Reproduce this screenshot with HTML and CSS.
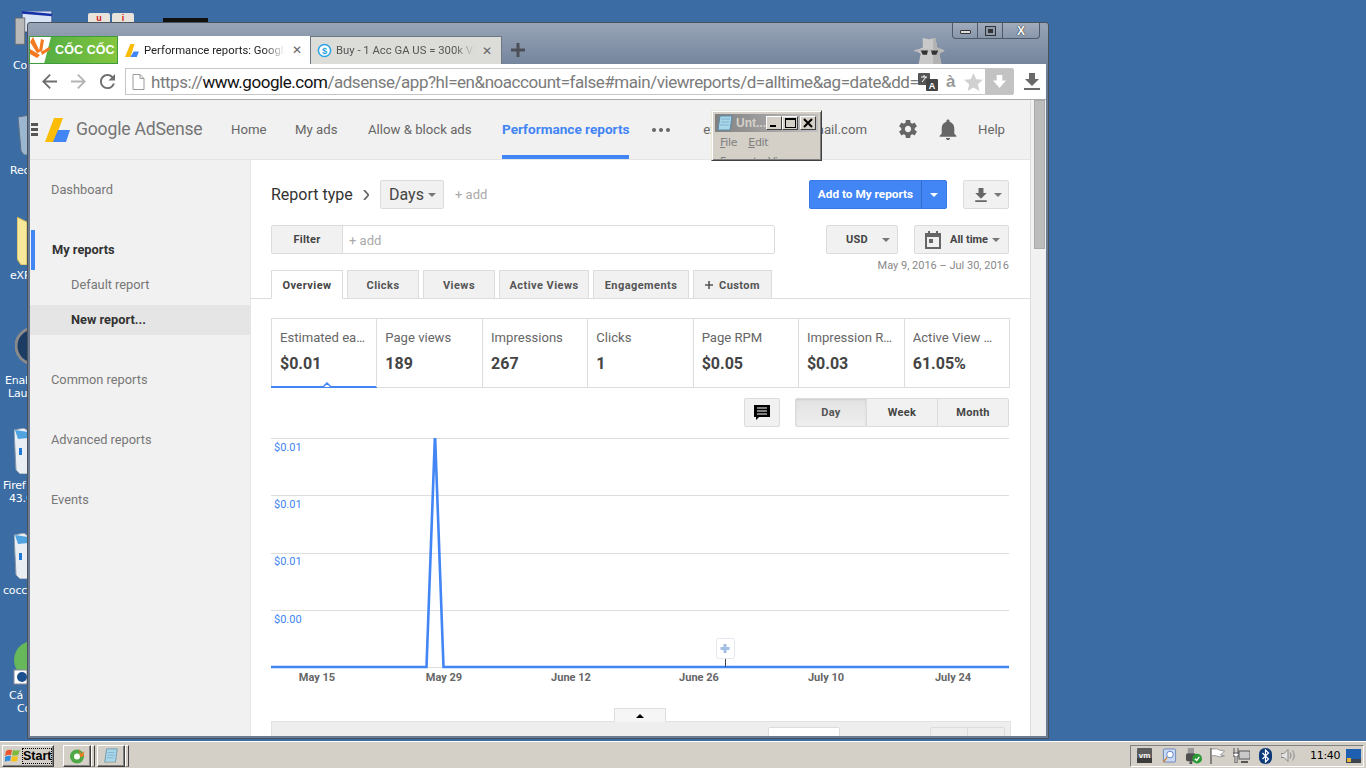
FILE: index.html
```html
<!DOCTYPE html>
<html lang="en">
<head>
<meta charset="utf-8">
<title>Performance reports: Google AdSense</title>
<link rel="stylesheet" href="styles.css">
</head>
<body>
<div class="desktop">
  <div class="dicon di-computer"><svg class="di-svg" viewBox="0 0 50 40"><rect x="8" y="0" width="34" height="24" fill="#d8e4f4" stroke="#3a4a8a"/><path d="M8 0l34 3v3L8 3z" fill="#1431a8"/><rect x="0" y="8" width="11" height="30" fill="#b9b9b9" stroke="#666"/></svg></div>
  <div class="dlabel dl-1">Co</div>
  <div class="dicon di-ui"><span class="ui-key">u</span><span class="ui-key">i</span></div>
  <div class="dicon di-black"></div>
  <div class="dicon di-bin"><svg class="di-svg" viewBox="0 0 12 40"><path d="M0 2L12 0v40H6L3 36z" fill="#9db6cf" stroke="#5a6f85"/></svg></div>
  <div class="dlabel dl-2">Rec</div>
  <div class="dicon di-folder"><svg class="di-svg" viewBox="0 0 12 48"><path d="M0 0l10 5v43H4L0 42z" fill="#f7e79a" stroke="#c7ad50"/></svg></div>
  <div class="dlabel dl-3">eXP</div>
  <div class="dicon di-enable"><svg class="di-svg" viewBox="0 0 14 38"><circle cx="19" cy="19" r="18" fill="#1c3c64" stroke="#8a8a8a" stroke-width="3"/></svg></div>
  <div class="dlabel dl-4a">Enab</div>
  <div class="dlabel dl-4b">Laun</div>
  <div class="dicon di-fx"><svg class="di-svg" viewBox="0 0 14 46"><path d="M0 2l10-2 4 3v43H6L2 42z" fill="#e9eef5" stroke="#8a97a8"/><path d="M1 2l13 2v6L4 11z" fill="#4ea3e0"/><rect x="5" y="20" width="3" height="7" fill="#1f79d6"/></svg></div>
  <div class="dlabel dl-5a">Firef</div>
  <div class="dlabel dl-5b">43.0</div>
  <div class="dicon di-cc"><svg class="di-svg" viewBox="0 0 14 46"><path d="M0 2l10-2 4 3v43H6L2 42z" fill="#e9eef5" stroke="#8a97a8"/><path d="M1 2l13 2v6L4 11z" fill="#4ea3e0"/><rect x="5" y="20" width="3" height="7" fill="#1f79d6"/></svg></div>
  <div class="dlabel dl-6">cocco</div>
  <div class="dicon di-green"><svg class="di-svg" viewBox="0 0 14 46"><circle cx="20" cy="20" r="19" fill="#66b85a"/><rect x="1" y="30" width="13" height="14" fill="#fff" stroke="#889"/><circle cx="9" cy="37" r="5" fill="#1c4f8f"/></svg></div>
  <div class="dlabel dl-7a">Cá n</div>
  <div class="dlabel dl-7b">Có</div>

  <section class="window">
    <div class="wincontrols">
      <span class="wc wc-min"><i class="wc-dash"></i></span>
      <span class="wc wc-max"><i class="wc-square"></i></span>
      <span class="wc wc-close">X</span>
    </div>
    <svg class="incognito" viewBox="0 0 34 28"><path d="M11 3l6 1 6-1 2 9 7 3-5 3 2 10H7l2-10-5-3 7-3z" fill="#c9c9c9"/><path d="M21 3l2 0 2 9 7 3-5 3 2 10h-8z" fill="#b3b3b3"/><path d="M4 14l26 0 2 2H2z" fill="#bdbdbd"/><path d="M9 15h7l-1 4h-4zM19 15h7l-2 4h-4z" fill="#333"/></svg>

    <div class="tabstrip">
      <div class="coccoc">
        <svg class="cc-ray" viewBox="0 0 22 27"><path d="M0 0h21L14 27H0z" fill="#fff"/><path d="M0 12l10 6-3 3-7-4zM3 0l7 15-3 1L0 5zM14 3l-2 12-3-1 2-12zM21 12l-9 6-1-3 8-5z" fill="#f37a1f"/></svg>
        <span class="cc-text">CỐC CỐC</span>
      </div>
      <div class="tab tab-on">
        <svg class="fav" viewBox="0 0 14 14"><path d="M5 1h4L5 13H0z" fill="#fbbc05"/><path d="M8 8h5l-2 5H5z" fill="#4285f4"/></svg>
        <span class="tab-title">Performance reports: Google AdSense</span>
        <span class="tab-x">✕</span>
      </div>
      <div class="tab tab-off">
        <svg class="fav" viewBox="0 0 16 16"><circle cx="8" cy="8" r="6.5" fill="#fff" stroke="#29a3e6" stroke-width="1.6"/><text x="8" y="11.5" text-anchor="middle" class="fav-dollar">$</text></svg>
        <span class="tab-title">Buy - 1 Acc GA US = 300k VCB</span>
        <span class="tab-x">✕</span>
      </div>
      <svg class="newtab" viewBox="0 0 14 14"><path d="M5.500 0h3v5.500h5.500v3H8.500V14h-3V8.500H0v-3h5.500z" fill="#4c5056"/></svg>
    </div>

    <div class="toolbar">
      <svg class="tb-ico tb-back" viewBox="4 4 16 16"><path d="M20 11H7.830l5.590-5.590L12 4l-8 8 8 8 1.410-1.410L7.830 13H20z"/></svg>
      <svg class="tb-ico tb-fwd" viewBox="4 4 16 16"><path d="M4 11h12.170l-5.590-5.590L12 4l8 8-8 8-1.410-1.410L16.170 13H4z"/></svg>
      <svg class="tb-ico tb-reload" viewBox="4 4 16 16"><path d="M17.650 6.350C16.200 4.900 14.210 4 12 4c-4.420 0-7.990 3.580-7.990 8s3.570 8 7.990 8c3.730 0 6.840-2.550 7.730-6h-2.080c-.82 2.330-3.040 4-5.650 4-3.310 0-6-2.690-6-6s2.690-6 6-6c1.660 0 3.140.69 4.220 1.780L13 11h7V4z"/></svg>
      <div class="omnibox">
        <svg class="doc" viewBox="0 0 13 16"><path d="M1 .5h7l4 4v11H1z" fill="#fff" stroke="#9a9a9a"/><path d="M8 .5v4h4" fill="none" stroke="#9a9a9a"/></svg>
        <div class="url"><span class="url-dim">https://</span><span class="url-host">www.google.com</span><span class="url-dim">/adsense/app?hl=en&amp;noaccount=false#main/viewreports/d=alltime&amp;ag=date&amp;dd=i</span></div>
        <svg class="om-trans" viewBox="0 0 20 20"><rect x="0" y="1" width="12" height="12" rx="1" fill="#555"/><rect x="8" y="7" width="12" height="12" rx="1" fill="#444"/><text x="14" y="17" text-anchor="middle" class="tr-a">A</text><path d="M3 5h6M6 3v2M4 10l4-5" stroke="#fff" fill="none"/></svg>
        <span class="om-a">à</span>
        <svg class="om-star" viewBox="2 2 20 19"><path d="M12 17.270L18.180 21l-1.640-7.030L22 9.240l-7.190-.61L12 2 9.190 8.630 2 9.240l5.460 4.730L5.820 21z"/></svg>
        <div class="om-dl"><svg class="om-dl-ico" viewBox="0 0 14 16"><path d="M4 1h6v6h4l-7 8-7-8h4z" fill="#fff"/></svg></div>
      </div>
      <svg class="tb-dl" viewBox="4 3 16 17"><path d="M19 9h-4V3H9v6H5l7 7zM4 18v2h16v-2z"/></svg>
    </div>

    <div class="viewport">
      <div class="page">
        <header class="appbar">
          <span class="burger"><i></i><i></i><i></i></span>
          <svg class="logo" viewBox="0 0 25 24"><path d="M9 0h9L9 24H0z" fill="#fbbc05"/><path d="M13 12h12l-4 12H8z" fill="#4285f4"/></svg>
          <span class="brand"><span class="brand-g">Google</span> AdSense</span>
          <nav class="nav">
            <a class="nav-item n-home">Home</a>
            <a class="nav-item n-ads">My ads</a>
            <a class="nav-item n-allow">Allow &amp; block ads</a>
            <a class="nav-item nav-on">Performance reports</a>
            <span class="dots"><i></i><i></i><i></i></span>
          </nav>
          <div class="appright">
            <span class="email">exampleacct12@gmail.com</span>
            <svg class="ab-ico ab-gear" viewBox="2 2 20 20"><path d="M19.430 12.980c.04-.32.07-.64.07-.98s-.03-.66-.07-.98l2.110-1.650c.19-.15.24-.42.12-.64l-2-3.460c-.12-.22-.39-.3-.61-.22l-2.490 1c-.52-.4-1.080-.73-1.690-.98l-.38-2.650C14.460 2.180 14.250 2 14 2h-4c-.25 0-.46.18-.49.42l-.38 2.650c-.61.25-1.170.59-1.690.98l-2.490-1c-.23-.09-.49 0-.61.22l-2 3.460c-.13.22-.07.49.12.64l2.110 1.650c-.04.32-.07.65-.07.98s.03.66.07.98l-2.110 1.650c-.19.15-.24.42-.12.64l2 3.460c.12.22.39.3.61.22l2.490-1c.52.4 1.080.73 1.690.98l.38 2.650c.03.24.24.42.49.42h4c.25 0 .46-.18.49-.42l.38-2.650c.61-.25 1.170-.59 1.690-.98l2.490 1c.23.09.49 0 .61-.22l2-3.460c.12-.22.07-.49-.12-.64zM12 15.500c-1.930 0-3.500-1.570-3.500-3.500s1.570-3.500 3.500-3.500 3.500 1.570 3.500 3.500-1.570 3.500-3.500 3.500z"/></svg>
            <svg class="ab-ico ab-bell" viewBox="4 2 16 20"><path d="M12 22c1.100 0 2-.9 2-2h-4c0 1.100.89 2 2 2zm6-6v-5c0-3.070-1.640-5.640-4.500-6.320V4c0-.83-.67-1.500-1.500-1.500s-1.500.67-1.500 1.500v.68C7.630 5.360 6 7.920 6 11v5l-2 2v1h16v-1z"/></svg>
            <span class="help">Help</span>
          </div>
        </header>
        <div class="appbody">
          <aside class="side">
            <div class="s-item s-dash">Dashboard</div>
            <div class="s-item s-my">My reports</div>
            <div class="s-item s-sub">Default report</div>
            <div class="s-item s-sub s-cur">New report...</div>
            <div class="s-item s-common">Common reports</div>
            <div class="s-item s-next">Advanced reports</div>
            <div class="s-item s-next">Events</div>
          </aside>
          <main class="main">
            <div class="row r-type">
              <span class="rt-label">Report type</span>
              <svg class="rt-chev" viewBox="0 0 6 10"><path d="M1 0l4.500 5L1 10" fill="none" stroke="#666" stroke-width="1.800"/></svg>
              <button class="btn btn-days">Days<i class="caret"></i></button>
              <span class="add add-r">+ add</span>
              <div class="spacer"></div>
              <div class="btn-blue"><span class="bb-main">Add to My reports</span><span class="bb-drop"><i class="caret caret-w"></i></span></div>
              <button class="btn btn-dl"><svg class="dl-ico" viewBox="5 3 14 17"><path d="M19 9h-4V3H9v6H5l7 7zM5 18v2h14v-2z"/></svg><i class="caret"></i></button>
            </div>
            <div class="row r-filter">
              <div class="filter"><span class="f-btn">Filter</span><span class="f-input"><span class="add">+ add</span></span></div>
              <div class="spacer"></div>
              <button class="btn btn-usd">USD<i class="caret"></i></button>
              <button class="btn btn-time"><svg class="cal" viewBox="0 0 16 18"><path d="M3 0h2v2h6V0h2v2h3v16H0V2h3zM2 6v10h12V6z" fill="#666"/><rect x="4" y="8" width="4" height="4" fill="#666"/></svg><span class="bt-label">All time</span><i class="caret"></i></button>
            </div>
            <div class="daterange">May 9, 2016 – Jul 30, 2016</div>
            <div class="tabs">
              <span class="rtab rtab-on t1">Overview</span>
              <span class="rtab t1">Clicks</span>
              <span class="rtab t1">Views</span>
              <span class="rtab t2">Active Views</span>
              <span class="rtab t3">Engagements</span>
              <span class="rtab t4"><svg class="plus" viewBox="0 0 8 8"><path d="M3.200 0h1.600v3.200H8v1.600H4.800V8H3.200V4.800H0V3.200h3.200z" fill="#555"/></svg>Custom</span>
            </div>
            <div class="cards">
              <div class="card card-on"><div class="c-label">Estimated earnings</div><div class="c-val">$0.01</div><svg class="notch" viewBox="0 0 12 6"><path d="M0 5h2l4-4 4 4h2" fill="#fff" stroke="#4285f4" stroke-width="1.500"/></svg></div>
              <div class="card"><div class="c-label">Page views</div><div class="c-val">189</div></div>
              <div class="card"><div class="c-label">Impressions</div><div class="c-val">267</div></div>
              <div class="card"><div class="c-label">Clicks</div><div class="c-val">1</div></div>
              <div class="card"><div class="c-label">Page RPM</div><div class="c-val">$0.05</div></div>
              <div class="card"><div class="c-label">Impression RPM</div><div class="c-val">$0.03</div></div>
              <div class="card"><div class="c-label">Active View Viewable</div><div class="c-val">61.05%</div></div>
            </div>
            <div class="row r-ctrl">
              <div class="spacer"></div>
              <button class="btn btn-cmt"><svg class="cmt" viewBox="0 0 16 16"><path d="M0 0h16v12H5l-3 3v-3H0z" fill="#000"/><path d="M3 3h10M3 6h10M3 9h10" stroke="#fff"/></svg></button>
              <div class="seg"><span class="seg-i seg-on">Day</span><span class="seg-i">Week</span><span class="seg-i">Month</span></div>
            </div>
            <svg class="chart" viewBox="0 0 738 256">
              <g class="grid"><path d="M0 .5h738M0 57.500h738M0 115.500h738M0 172.500h738M0 229.500h738"/></g>
              <g class="ylab"><text x="3" y="13">$0.01</text><text x="3" y="70">$0.01</text><text x="3" y="127">$0.01</text><text x="3" y="185">$0.00</text></g>
              <polyline class="series" points="0,229 155.500,229 164,-4 172.500,229 738,229"/>
              <path class="stem" d="M454.500 220v9"/>
              <rect class="marker" x="445.500" y="200.500" width="18" height="20" rx="2"/>
              <path class="marker-plus" d="M452.500 206h3v3h3v3h-3v3h-3v-3h-3v-3h3z"/>
              <g class="xlab"><text x="46" y="243">May 15</text><text x="173" y="243">May 29</text><text x="300" y="243">June 12</text><text x="428" y="243">June 26</text><text x="555" y="243">July 10</text><text x="682" y="243">July 24</text></g>
            </svg>
            <div class="drawer-tab"><i class="caret-up"></i></div>
            <div class="drawer"><span class="dr-input"></span><span class="dr-pager"><i></i><i></i></span></div>
          </main>
        </div>
      </div>
      <div class="scrollbar"><div class="thumb"></div></div>
    </div>
  </section>

  <section class="notepad">
    <div class="np-title">
      <svg class="np-ico" viewBox="0 0 16 16"><path d="M3 1h12l-2 14H1z" fill="#a9d7ea" stroke="#5d8aa6"/><path d="M4 4h9M4 7h8M3 10h9" stroke="#7fb1cc"/></svg>
      <span class="np-name">Unt...</span>
      <span class="np-btn"><i class="np-min"></i></span>
      <span class="np-btn"><i class="np-max"></i></span>
      <span class="np-btn np-close"><svg viewBox="0 0 10 10" class="np-x"><path d="M1 1l8 8M9 1l-8 8" stroke="#000" stroke-width="2"/></svg></span>
    </div>
    <div class="np-menu"><span><u>F</u>ile</span><span><u>E</u>dit</span></div>
    <div class="np-menu np-menu2"><span>Format</span><span>View</span></div>
  </section>
</div>

<footer class="taskbar">
  <button class="start"><svg class="flag" viewBox="0 0 16 15"><path d="M1 3q3-2 6-1l-1 5q-3-1-6 1z" fill="#e9542f"/><path d="M8 2q3 1 7 0l-2 5q-3 1-6 0z" fill="#7cb83a"/><path d="M0 9q3-2 6-1l-1 5q-3-1-5 1z" fill="#2f8ee0"/><path d="M7 8q3 1 6 0l-1 5q-4 1-6 0z" fill="#f4c21b"/></svg><span class="start-t">Start</span></button>
  <button class="tbtn tb-first"><svg class="tbtn-ico" viewBox="0 0 16 16"><circle cx="8" cy="8.500" r="7" fill="#4fa845"/><circle cx="8" cy="8.500" r="3" fill="#fff"/><path d="M10 0l2 6 4-3-2 4 2 1-5 1z" fill="#f37a1f"/></svg></button><span class="tsep"></span>
  <button class="tbtn"><svg class="tbtn-ico" viewBox="0 0 16 18"><path d="M3 1h12l-2 15H1z" fill="#a9d7ea" stroke="#6e97ad"/><path d="M2 16h11l1 1H3z" fill="#c8b98e"/><path d="M4 5h8M4 8h8M3 11h8" stroke="#7fb1cc"/></svg></button><span class="tsep"></span>
  <div class="tray">
    <svg class="tr i1" viewBox="0 0 15 15"><rect width="15" height="15" rx="1" fill="#5c5c5c"/><rect y="10" width="15" height="5" fill="#3c3c3c"/><text x="7.500" y="10" text-anchor="middle" class="vm">vm</text></svg>
    <svg class="tr i2" viewBox="0 0 15 16"><rect x="1" y="1" width="13" height="14" rx="1" fill="#c9d8f3" stroke="#6d86b8"/><circle cx="8" cy="7" r="3.500" fill="#fff" stroke="#5a7ec0"/><path d="M5 10l-4 5" stroke="#d2822f" stroke-width="1.500"/></svg>
    <svg class="tr i3" viewBox="0 0 18 18"><rect x="2" y="0" width="7" height="6" fill="#9a9a9a"/><rect x="0" y="6" width="11" height="9" rx="2" fill="#4e4e4e"/><rect x="4" y="15" width="3" height="3" fill="#4e4e4e"/><circle cx="12.500" cy="12" r="5.500" fill="#2a9b35"/><path d="M10 12l2 2 3-4" stroke="#fff" stroke-width="1.500" fill="none"/></svg>
    <svg class="tr i4" viewBox="0 0 16 16"><path d="M1.500 0v16" stroke="#666" stroke-width="1.500"/><path d="M2 1q6-1 8 1l5 1-4 4 4 1q-5 2-8 0-3-1-5 0z" fill="#fff" stroke="#999"/></svg>
    <svg class="tr i5" viewBox="0 0 17 15"><path d="M1 0v6M5 0v6M0 5h6v3H4v7H2V8H0z" fill="#fff" stroke="#555"/><rect x="6" y="3" width="11" height="8" fill="#c9c9c9" stroke="#555"/><path d="M8 14h7" stroke="#555" stroke-width="2"/></svg>
    <svg class="tr i6" viewBox="0 0 13 16"><rect width="13" height="16" rx="6" fill="#0d3b7a"/><path d="M3.500 5l6 6-3 3V2l3 3-6 6" stroke="#fff" stroke-width="1.200" fill="none"/></svg>
    <svg class="tr i7" viewBox="0 0 16 14"><path d="M0 5h3l4-4v12L3 9H0z" fill="#e2e2e2" stroke="#888"/><path d="M9 4q2 3 0 6M11.500 2q3.500 5 0 10" stroke="#999" stroke-width="1.200" fill="none"/></svg>
    <span class="clock">11:40</span>
    <svg class="tr i8" viewBox="0 0 15 14"><rect width="15" height="14" fill="#1f5fb0"/><rect y="10" width="15" height="4" fill="#3c4450"/><rect x="1" y="9" width="4" height="4" fill="#e2b23b"/></svg>
  </div>
</footer>
</body>
</html>
```

FILE: styles.css
```css
* { box-sizing: border-box; }
html, body { margin: 0; padding: 0; }
body { width: 1366px; height: 768px; overflow: hidden; background: #3b6ea5; font-family: Roboto, "Liberation Sans", sans-serif; display: flex; flex-direction: column; }
i { display: block; }
button { font-family: inherit; }

.desktop { position: relative; height: 741px; flex: none; overflow: hidden; background: #3b6ca3; }
.dicon { position: absolute; }
.di-svg { display: block; width: 100%; height: 100%; }
.di-computer { left: 15px; top: 11px; width: 44px; height: 35px; }
.di-ui { left: 88px; top: 13px; display: flex; gap: 2px; }
.ui-key { width: 22px; height: 10px; background: #e8e4dc; border-radius: 2px 2px 0 0; color: #d0201c; font: bold 9px/10px "Liberation Sans", sans-serif; text-align: center; }
.di-black { left: 163px; top: 18px; width: 45px; height: 4px; background: #111; }
.di-bin { left: 18px; top: 115px; width: 12px; height: 40px; }
.di-folder { left: 17px; top: 217px; width: 12px; height: 48px; }
.di-enable { left: 15px; top: 327px; width: 14px; height: 38px; }
.di-fx { left: 14px; top: 428px; width: 14px; height: 46px; }
.di-cc { left: 14px; top: 533px; width: 14px; height: 46px; }
.di-green { left: 13px; top: 640px; width: 14px; height: 46px; }
.dlabel { position: absolute; color: #fff; font: 11px/13px "DejaVu Sans", sans-serif; letter-spacing: -.2px; white-space: nowrap; }
.dl-1 { left: 13px; top: 59px; }
.dl-2 { left: 10px; top: 164px; }
.dl-3 { left: 10px; top: 269px; }
.dl-4a { left: 5px; top: 374px; }
.dl-4b { left: 8px; top: 387px; }
.dl-5a { left: 3px; top: 479px; }
.dl-5b { left: 9px; top: 492px; }
.dl-6 { left: 3px; top: 584px; }
.dl-7a { left: 9px; top: 689px; }
.dl-7b { left: 17px; top: 702px; }

.window { position: absolute; left: 27px; top: 22px; width: 1022px; height: 717px; border: 1px solid #4b515a; border-radius: 3px 3px 0 0; padding: 0 2px 2px; background: linear-gradient(#98a4b6, #74859d 41px, #6a7b92 60px); display: flex; flex-direction: column; }
.wincontrols { position: absolute; right: 8px; top: 0; height: 16px; width: 88px; display: flex; border: 1px solid #4d5a6c; border-top: 0; border-radius: 0 0 4px 4px; background: linear-gradient(#a1acbc, #8896aa); }
.wc { flex: 1; display: flex; align-items: center; justify-content: center; border-left: 1px solid #4d5a6c; color: #fff; font: bold 12px "Liberation Sans", sans-serif; text-shadow: 0 0 1px #222, 0 0 1px #222; }
.wc:first-child { border-left: 0; }
.wc-close { flex: 1.5; }
.wc-dash { width: 11px; height: 4px; border: 1px solid #333; background: #ddd; border-radius: 1px; margin-top: 3px; }
.wc-square { width: 11px; height: 10px; border: 1px solid #333; background: #ccd; box-shadow: inset 0 0 0 2px #8c99ac, inset 0 0 0 4px #333; }
.incognito { position: absolute; left: 883px; top: 12px; width: 36px; height: 29px; }

.tabstrip { height: 41px; padding-top: 13px; flex: none; display: flex; align-items: stretch; margin-left: -1px; }
.coccoc { width: 89px; height: 28px; background: linear-gradient(90deg, #4aa944, #84c63e); border: 1px solid #3f9c3c; display: flex; align-items: center; overflow: hidden; }
.cc-ray { width: 22px; height: 27px; flex: none; }
.cc-text { color: #fff; font: bold 12.500px/1 "Liberation Sans", sans-serif; margin-left: 3px; white-space: nowrap; letter-spacing: .1px; }
.tab { width: 193px; height: 28px; padding: 0 6px 0 7px; display: flex; align-items: center; font-size: 11.300px; white-space: nowrap; }
.tab-on { background: #fff; color: #222; }
.tab-off { width: 192px; padding-left: 6px; background: #dcdcd8; color: #555; border: 1px solid #6e7682; border-bottom: 0; margin-left: -1px; }
.fav { width: 15px; height: 15px; flex: none; margin-right: 4px; }
.fav-dollar { font: bold 10px "Liberation Sans", sans-serif; fill: #29a3e6; }
.tab-title { flex: 1; overflow: hidden; -webkit-mask-image: linear-gradient(90deg, #000 85%, transparent); mask-image: linear-gradient(90deg, #000 85%, transparent); }
.tab-x { width: 16px; margin-left: 4px; color: #666; font: bold 12px "DejaVu Sans", sans-serif; text-align: center; }
.newtab { width: 14px; height: 14px; margin: 7px 0 0 9px; }

.toolbar { height: 36px; flex: none; background: #fff; border-bottom: 1px solid #aaa; display: flex; align-items: center; position: relative; }
.tb-ico { width: 15px; height: 15px; flex: none; fill: #6e6e6e; }
.tb-back { margin-left: 12px; }
.tb-fwd { margin-left: 14px; fill: #b4b4b4; }
.tb-reload { margin-left: 14px; }
.omnibox { width: 888px; height: 27px; margin-left: 10px; border: 1px solid #c6c6c6; display: flex; align-items: center; padding-left: 6px; }
.doc { width: 13px; height: 16px; flex: none; }
.url { width: 767px; margin-left: 6px; overflow: hidden; white-space: nowrap; font-size: 17px; line-height: 24px; flex: none; letter-spacing: -.46px; }
.url-dim { color: #7b7b7b; }
.url-host { color: #111; }
.om-trans { width: 20px; height: 20px; flex: none; }
.tr-a { font: bold 9px "Liberation Sans", sans-serif; fill: #fff; }
.om-a { width: 12px; margin-left: 8px; color: #999; font: bold 17px/20px "Liberation Sans", sans-serif; flex: none; }
.om-star { width: 19px; height: 18px; margin-left: 6px; fill: #d0d0d0; flex: none; }
.om-dl { width: 29px; height: 25px; margin-left: 2px; background: #c3c3c3; display: flex; align-items: center; justify-content: center; flex: none; }
.om-dl-ico { width: 13px; height: 15px; }
.tb-dl { width: 16px; height: 17px; margin-left: 11px; fill: #6a6a6a; flex: none; }

.viewport { flex: 1; min-height: 0; display: flex; background: #f1f1f1; overflow: hidden; }
.page { width: 1000px; flex: none; display: flex; flex-direction: column; overflow: hidden; }
.scrollbar { flex: 1; background: #f1f1f1; border-left: 1px solid #ddd; padding-left: 3px; }
.thumb { width: 11px; height: 149px; background: #bcbcbc; border: 1px solid #aaa; }

.appbar { height: 60px; flex: none; background: #f1f1f1; border-bottom: 1px solid #e5e5e5; display: flex; align-items: center; color: #666; font-size: 13.200px; }
.burger { width: 7px; margin-left: 1px; display: flex; flex-direction: column; gap: 2px; }
.burger i { height: 3px; background: #555; }
.logo { width: 25px; height: 24px; margin-left: 7px; flex: none; }
.brand { margin-left: 6px; font-size: 17.600px; color: #757575; white-space: nowrap; width: 125px; letter-spacing: -.2px; padding-bottom: 2px; }
.nav { display: flex; align-items: stretch; height: 59px; margin-left: 30px; }
.nav-item { display: flex; align-items: center; white-space: nowrap; padding-bottom: 1px; }
.n-home { width: 64px; }
.n-ads { width: 73px; }
.n-allow { width: 134px; }
.nav-on { color: #4285f4; font-weight: 700; font-size: 13.600px; width: 127px; border-bottom: 4px solid #4285f4; padding-top: 3px; padding-bottom: 0; }
.dots { margin-left: 23px; display: flex; gap: 3px; align-items: center; }
.dots i { width: 4px; height: 4px; border-radius: 50%; background: #666; }
.appright { margin-left: auto; display: flex; align-items: center; padding-bottom: 1px; }
.email { white-space: nowrap; }
.ab-ico { fill: #666; flex: none; }
.ab-gear { width: 18px; height: 18px; margin-left: 32px; }
.ab-bell { width: 18px; height: 21px; margin-left: 22px; }
.help { margin-left: 21px; margin-right: 25px; }

.appbody { flex: 1; min-height: 0; display: flex; }
.side { width: 221px; flex: none; background: #f1f1f1; border-right: 1px solid #e5e5e5; padding-top: 14px; font-size: 12.800px; color: #777; }
.s-item { height: 30px; line-height: 32px; padding-left: 21px; white-space: nowrap; }
.s-my { margin-top: 26px; height: 40px; line-height: 39px; border-left: 4px solid #4285f4; margin-left: 1px; padding-left: 17px; font-weight: 700; color: #333; }
.s-sub { padding-left: 41px; line-height: 30px; }
.s-cur { margin-top: 5px; background: #e5e5e5; font-weight: 700; color: #333; line-height: 29px; }
.s-common { margin-top: 29px; }
.s-next { margin-top: 30px; }

.main { width: 779px; flex: none; background: #fff; padding: 20px 21px 0 20px; overflow: hidden; display: flex; flex-direction: column; }
.row { display: flex; align-items: center; flex: none; }
.spacer { flex: 1; }
.btn { height: 29px; padding: 0; border: 1px solid #dcdcdc; border-radius: 2px; background: #f1f1f1; color: #444; display: flex; align-items: center; flex: none; }
.caret { width: 0; height: 0; border-left: 4px solid transparent; border-right: 4px solid transparent; border-top: 4px solid #777; flex: none; }
.caret-w { border-top-color: #fff; }

.r-type { height: 29px; }
.rt-label { font-size: 16px; color: #333; width: 92px; white-space: nowrap; }
.rt-chev { width: 6px; height: 10px; flex: none; }
.btn-days { width: 64px; margin-left: 11px; font-size: 16px; padding-left: 8px; gap: 4px; }
.add { font-size: 13px; color: #aaa; white-space: nowrap; }
.add-r { margin-left: 11px; }
.btn-blue { width: 138px; height: 29px; background: #4285f4; border: 1px solid #3b78e7; border-radius: 2px; color: #fff; display: flex; align-items: stretch; font-size: 11.800px; font-weight: 700; flex: none; }
.bb-main { width: 112px; padding-bottom: 1px; display: flex; align-items: center; justify-content: center; white-space: nowrap; border-right: 1px solid #3469c8; }
.bb-drop { flex: 1; display: flex; align-items: center; justify-content: center; }
.btn-dl { width: 46px; margin-left: 16px; padding-left: 11px; gap: 7px; }
.dl-ico { width: 12px; height: 14px; fill: #666; }

.r-filter { height: 29px; margin-top: 16px; }
.filter { width: 504px; height: 29px; display: flex; border: 1px solid #dcdcdc; border-radius: 2px; }
.f-btn { width: 71px; background: #f1f1f1; border-right: 1px solid #dcdcdc; display: flex; align-items: center; justify-content: center; font-size: 11px; font-weight: 700; color: #444; letter-spacing: .2px; }
.f-input { flex: 1; display: flex; align-items: center; padding-left: 6px; padding-top: 2px; }
.btn-usd { width: 72px; padding-left: 19px; font-size: 11px; font-weight: 700; letter-spacing: .3px; gap: 14px; }
.btn-time { width: 95px; margin-left: 16px; padding-left: 10px; font-size: 11px; font-weight: 700; }
.cal { width: 16px; height: 18px; flex: none; }
.bt-label { margin-left: 9px; margin-right: 4px; white-space: nowrap; }

.daterange { height: 16px; line-height: 24px; text-align: right; font-size: 11px; color: #888; flex: none; }
.tabs { display: flex; gap: 4px; height: 29px; flex: none; margin: 0 -21px 0 -20px; padding-left: 20px; border-bottom: 1px solid #ddd; }
.rtab { height: 29px; padding-top: 1px; background: #f1f1f1; border: 1px solid #dcdcdc; border-bottom: 1px solid #ddd; display: flex; align-items: center; justify-content: center; font-size: 11px; font-weight: 700; color: #555; letter-spacing: .45px; white-space: nowrap; }
.t1 { width: 72px; }
.t2 { width: 90px; }
.t3 { width: 96px; }
.t4 { width: 79px; }
.rtab-on { background: #fff; border-bottom-color: #fff; color: #444; }
.plus { width: 8px; height: 8px; margin-right: 6px; }

.cards { display: grid; grid-template-columns: repeat(7, 1fr); width: 739px; height: 70px; margin-top: 19px; border: 1px solid #ddd; flex: none; }
.card { position: relative; min-width: 0; padding: 10px 8px 0 8px; border-left: 1px solid #ddd; margin-left: -.5px; }
.card:first-child { border-left: 0; margin-left: 0; }
.card:nth-child(2) { margin-left: -1px; }
.card:last-child { margin-left: 0; padding-right: 14px; }
.c-label { font-size: 13.100px; line-height: 17px; color: #666; white-space: nowrap; overflow: hidden; text-overflow: ellipsis; }
.c-val { font-size: 16px; line-height: 18px; margin-top: 9px; font-weight: 700; color: #444; }
.card-on::after { content: ""; position: absolute; left: -1px; right: 0; bottom: -1px; height: 2px; background: #4285f4; }
.notch { position: absolute; left: 49px; bottom: -1px; width: 12px; height: 6px; z-index: 1; }

.r-ctrl { height: 29px; margin-top: 10px; }
.btn-cmt { width: 36px; justify-content: center; }
.cmt { width: 16px; height: 16px; }
.seg { width: 214px; height: 29px; margin-left: 15px; display: flex; border: 1px solid #dcdcdc; border-radius: 2px; background: #f1f1f1; }
.seg-i { flex: 1; display: flex; align-items: center; justify-content: center; font-size: 11px; font-weight: 700; color: #444; border-left: 1px solid #dcdcdc; letter-spacing: .3px; }
.seg-i:first-child { border-left: 0; }
.seg-on { background: linear-gradient(#e2e2e2, #eee); box-shadow: inset 0 1px 2px #ccc; color: #555; }

.chart { width: 738px; height: 256px; margin-top: 11px; flex: none; display: block; overflow: hidden; }
.grid path { stroke: #ddd; fill: none; }
.ylab text { font-size: 11px; fill: #4285f4; }
.series { fill: none; stroke: #4285f4; stroke-width: 2.600; stroke-linejoin: miter; }
.stem { stroke: #445; fill: none; }
.marker { fill: #fff; stroke: #e4e7ee; }
.marker-plus { fill: #a3bfe6; }
.xlab text { font-size: 11px; font-weight: 700; fill: #666; text-anchor: middle; }

.drawer-tab { width: 52px; height: 14px; flex: none; margin: 14px 0 -1px 343px; position: relative; background: #f6f6f6; border: 1px solid #ddd; border-bottom: 0; display: flex; justify-content: center; align-items: center; z-index: 1; }
.caret-up { width: 0; height: 0; border-left: 4px solid transparent; border-right: 4px solid transparent; border-bottom: 4px solid #000; }
.drawer { height: 40px; width: 740px; flex: none; background: #eee; border: 1px solid #e2e2e2; display: flex; align-items: flex-start; padding-top: 5px; }
.dr-input { width: 72px; height: 24px; margin-left: 496px; background: #fff; border: 1px solid #ddd; border-radius: 2px; }
.dr-pager { width: 75px; height: 24px; margin-left: 90px; border: 1px solid #ddd; border-radius: 2px; display: flex; }
.dr-pager i { flex: 1; border-left: 1px solid #ddd; }
.dr-pager i:first-child { border-left: 0; }

.notepad { position: absolute; left: 711px; top: 110px; width: 111px; height: 51px; background: #d4d0c8; border: 1px solid; border-color: #ece9d8 #404040 #404040 #ece9d8; box-shadow: inset 1px 1px 0 #fff, inset -1px -1px 0 #808080; padding: 3px; overflow: hidden; }
.np-title { height: 18px; background: linear-gradient(90deg, #808080, #c0c0c0); display: flex; align-items: center; padding: 0 2px 0 2px; color: #d4d0c8; font: bold 12px "Liberation Sans", sans-serif; }
.np-ico { width: 16px; height: 16px; flex: none; }
.np-name { width: 32px; margin-left: 3px; white-space: nowrap; }
.np-btn { width: 16px; height: 14px; background: #d4d0c8; border: 1px solid; border-color: #fff #404040 #404040 #fff; display: flex; align-items: center; justify-content: center; flex: none; }
.np-btn + .np-btn { margin-left: 0; }
.np-close { margin-left: 2px !important; }
.np-min { width: 6px; height: 2px; background: #000; margin-top: 6px; margin-right: 3px; }
.np-max { width: 11px; height: 10px; border: 1px solid #000; border-top-width: 2px; }
.np-x { width: 10px; height: 10px; }
.np-menu { display: flex; gap: 11px; padding: 4px 0 0 5px; font: 11px/13px "DejaVu Sans", sans-serif; color: #808080; letter-spacing: -.3px; }
.np-menu2 { padding-top: 6px; }

.taskbar { height: 27px; flex: none; background: #d4d0c8; border-top: 1px solid #fff; display: flex; align-items: center; padding-top: 1px; padding-left: 2px; }
.start { width: 52px; height: 22px; padding: 0 0 0 2px; background: #d4d0c8; border: 1px solid; border-color: #fff #404040 #404040 #fff; box-shadow: inset -1px -1px 0 #808080; display: flex; align-items: center; }
.flag { width: 16px; height: 15px; flex: none; }
.start-t { font: bold 12.500px "Liberation Sans", sans-serif; margin-left: 1px; padding: 1px 1px; outline: 1px dotted #000; outline-offset: -1px; color: #000; }
.tbtn { width: 28px; height: 22px; padding: 0; background: #d4d0c8; border: 1px solid; border-color: #fff #404040 #404040 #fff; box-shadow: inset -1px -1px 0 #808080; display: flex; align-items: center; justify-content: center; }
.tb-first { margin-left: 9px; }
.tbtn-ico { width: 16px; height: 16px; }
.tsep { width: 4px; height: 22px; margin-right: 2px; background: #d4d0c8; border: 1px solid; border-color: #fff #404040 #808080 #fff; }
.tray { margin-left: auto; margin-right: 2px; width: 234px; height: 22px; border: 1px solid; border-color: #808080 #fff #fff #808080; display: flex; align-items: center; position: relative; padding-left: 6px; }
.tr { flex: none; height: 15px; }
.i1 { width: 15px; }
.i2 { width: 15px; margin-left: 10px; }
.i3 { width: 18px; height: 16px; margin-left: 8px; }
.i4 { width: 17px; height: 16px; margin-left: 6px; }
.i5 { width: 17px; margin-left: 7px; }
.i6 { width: 13px; height: 16px; margin-left: 9px; }
.i7 { width: 16px; margin-left: 9px; }
.vm { font: bold 8px "Liberation Sans", sans-serif; fill: #fff; }
.clock { font: 11px "DejaVu Sans", sans-serif; color: #000; margin-left: 13px; letter-spacing: -.3px; width: 36px; white-space: nowrap; }
.i8 { width: 15px; height: 14px; }
```
